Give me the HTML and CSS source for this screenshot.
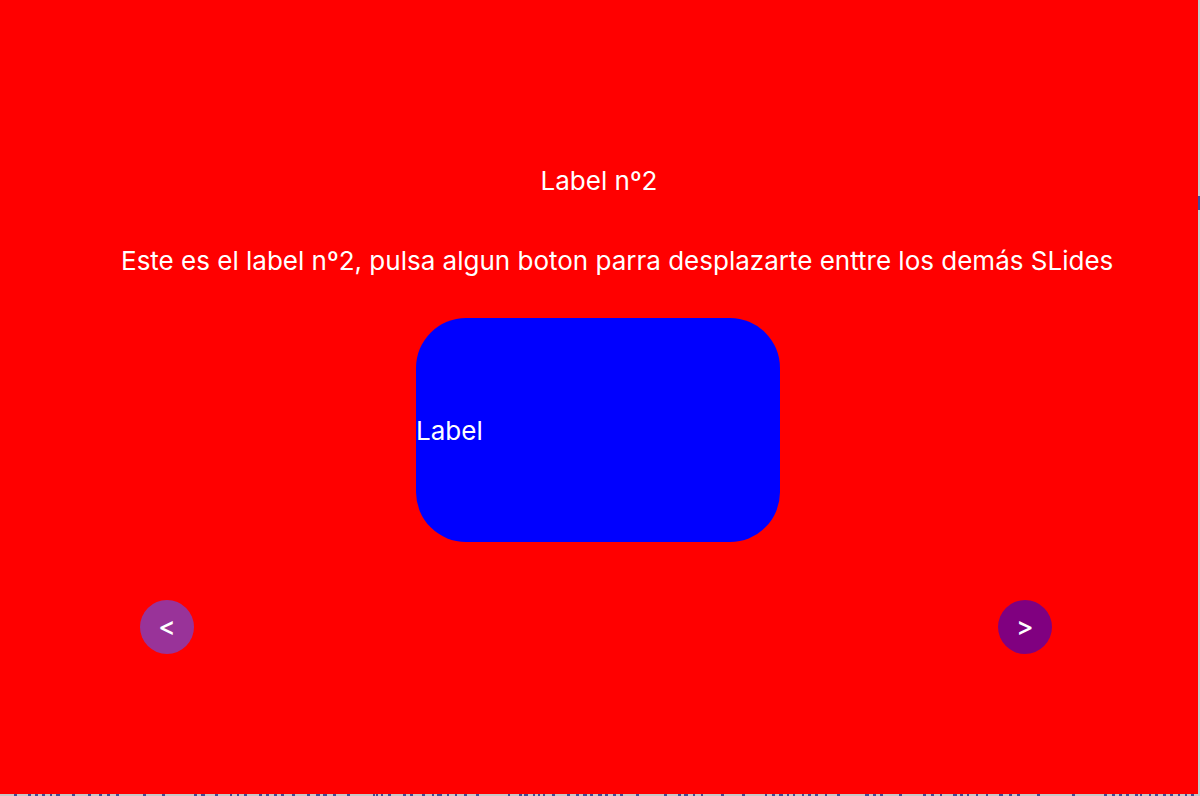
FILE: index.html
```
<!DOCTYPE html>
<html lang="es">
<head>
<meta charset="utf-8">
<title>Slides</title>
<link rel="stylesheet" href="styles.css">
</head>
<body>
<main class="slide">
  <h1 class="title">Label nº2</h1>
  <p class="message">Este es el label nº2, pulsa algun boton parra desplazarte enttre los demás SLides</p>
  <div class="card">Label</div>
  <nav class="controls">
    <button class="step step-active" type="button">&lt;</button>
    <button class="step" type="button">&gt;</button>
  </nav>
</main>
<div class="edge"></div>
<svg class="sliver" viewBox="0 0 1200 2" preserveAspectRatio="none" aria-hidden="true">
  <path stroke="#3f4d94" stroke-width="2" d="M14 1h3M28 1h3M35 1h3M42 1h3M50 1h2M56 1h4M72 1h3M88 1h3M99 1h3M107 1h3M116 1h3M143 1h3M162 1h3M194 1h3M201 1h4M215 1h3M230 1h2M237 1h2M244 1h3M259 1h3M266 1h3M274 1h3M281 1h3M292 1h3M307 1h3M316 1h4M323 1h4M333 1h3M347 1h3M373 1h2M376 1h2M381 1h2M388 1h3M403 1h3M410 1h3M422 1h3M432 1h2M437 1h5M447 1h2M455 1h2M464 1h3M476 1h3M508 1h2M519 1h3M524 1h4M533 1h2M538 1h2M543 1h2M552 1h3M567 1h3M576 1h3M583 1h4M590 1h3M598 1h4M605 1h3M613 1h3M620 1h3M636 1h3M664 1h3M678 1h3M684 1h4M693 1h2M701 1h2M721 1h3M742 1h3M765 1h2M772 1h3M779 1h4M787 1h2M793 1h2M802 1h2M808 1h3M815 1h3M825 1h2M837 1h3M865 1h4M873 1h3M880 1h3M899 1h3M923 1h3M931 1h3M940 1h2M953 1h4M960 1h3M967 1h2M976 1h2M986 1h2M999 1h4M1009 1h3M1017 1h3M1037 1h3M1072 1h3M1104 1h3M1112 1h3M1119 1h3M1126 1h3M1135 1h3M1140 1h2M1149 1h2M1155 1h3M1163 1h3M1170 1h3M1178 1h2M1185 1h2M1191 1h3"/>
</svg>
</body>
</html>
```

FILE: styles.css
```
* {
  box-sizing: border-box;
}

body {
  margin: 0;
  min-height: 100vh;
  display: grid;
  grid-template-columns: 1fr 2px;
  grid-template-rows: 1fr 2px;
  background: #c8c8c8;
  color: #fff;
  font: 26px/32px Inter, sans-serif;
}

.slide {
  display: flex;
  flex-direction: column;
  align-items: center;
  padding-top: 165px;
  background: #f00;
}

.title {
  margin: 0;
  font: inherit;
}

.message {
  align-self: flex-start;
  margin: 48px 0 0;
  padding-left: 121px;
  white-space: nowrap;
}

.card {
  display: flex;
  align-items: center;
  width: 364px;
  height: 224px;
  margin-top: 41px;
  margin-right: 2px;
  padding-top: 2px;
  border-radius: 50px;
  background: #00f;
}

.controls {
  align-self: stretch;
  display: flex;
  justify-content: space-between;
  margin-top: 58px;
  padding: 0 146px 0 140px;
}

.step {
  width: 54px;
  height: 54px;
  padding: 0;
  border: 0;
  border-radius: 50%;
  background: #800080;
  color: inherit;
  font: inherit;
  font-weight: 500;
}

.step-active {
  background: #993399;
}

.edge {
  background: linear-gradient(#3b4fa0, #3b4fa0) 0 196px / 2px 14px no-repeat, #c8cacd;
}

.sliver {
  grid-column: 1 / -1;
  display: block;
  width: 100%;
  height: 2px;
}
```
